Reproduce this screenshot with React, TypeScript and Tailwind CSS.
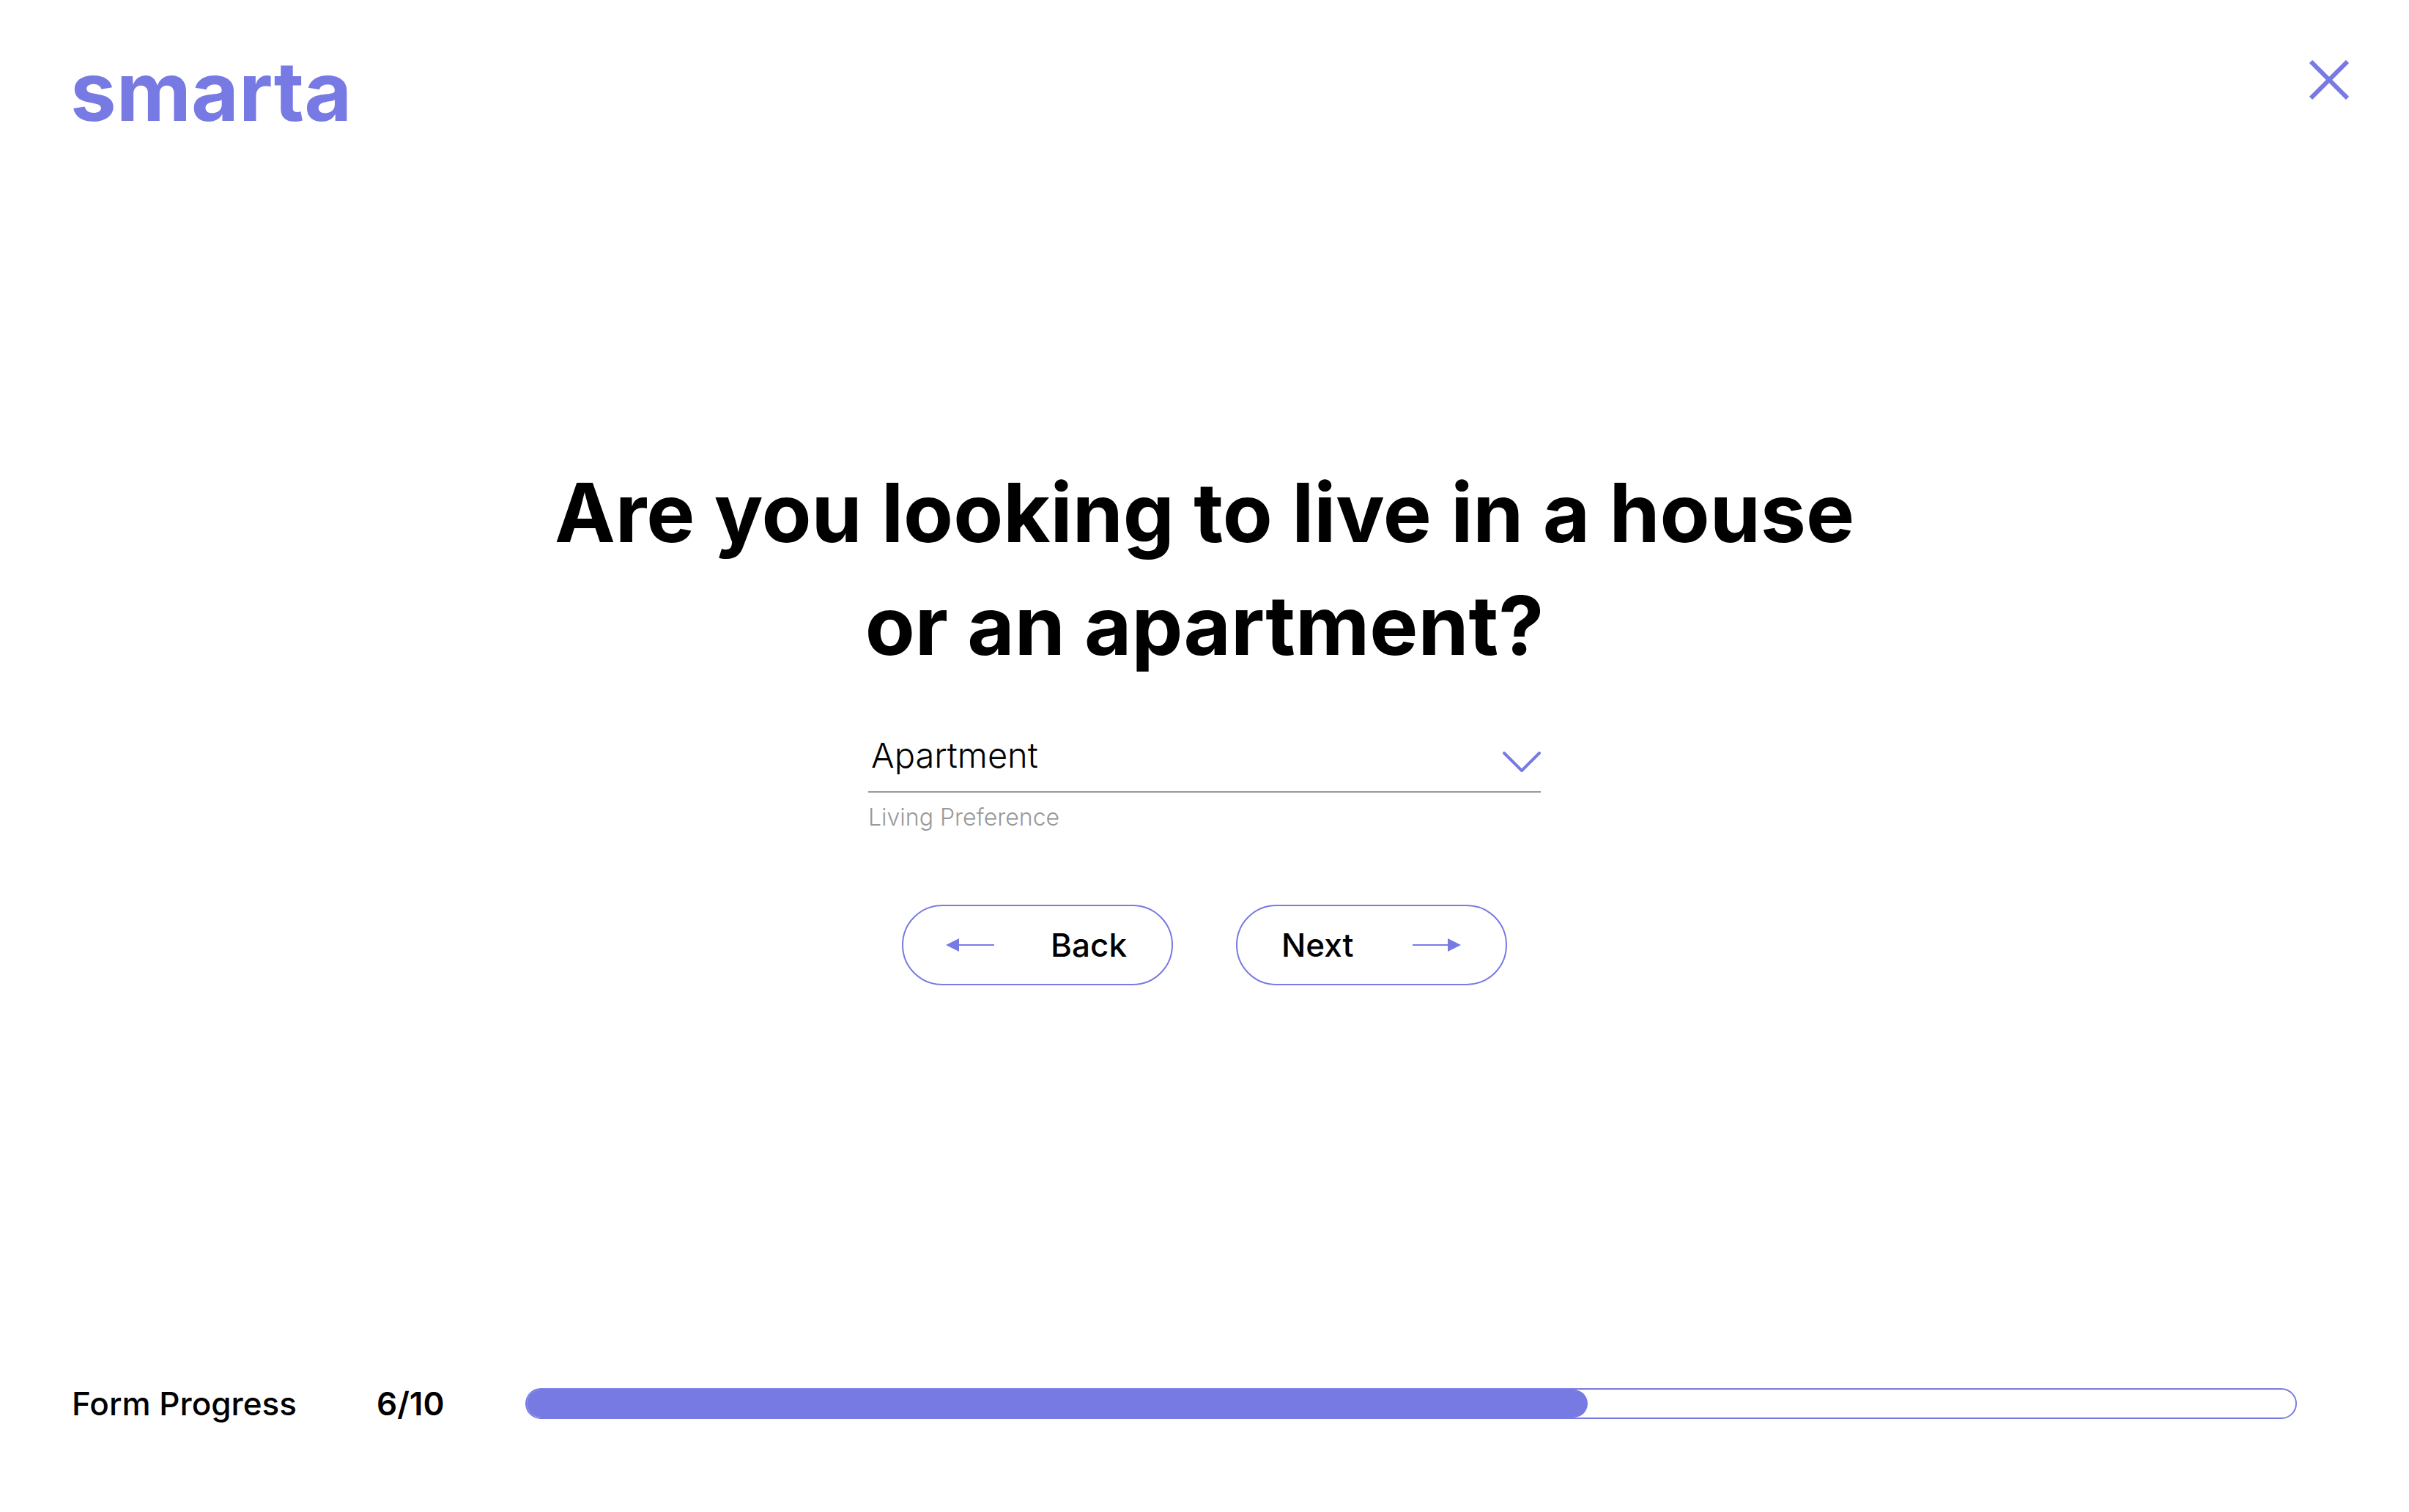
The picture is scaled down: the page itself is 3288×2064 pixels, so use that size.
import { useState } from "react";

const TOTAL_STEPS = 10;
const CURRENT_STEP = 6;

function CloseIcon() {
  return (
    <svg viewBox="0 0 54 54" className="size-[54px]" fill="none" stroke="currentColor" strokeWidth="6" aria-hidden="true">
      <path d="M2 2 52 52M52 2 2 52" />
    </svg>
  );
}

function ChevronIcon() {
  return (
    <svg
      viewBox="0 0 52 28"
      className="pointer-events-none absolute right-0 bottom-[26px] h-[28px] w-[52px] text-[#787ae4]"
      fill="none"
      stroke="currentColor"
      strokeWidth="4"
      strokeLinecap="round"
      aria-hidden="true"
    >
      <path d="M2 2 26 26 50 2" />
    </svg>
  );
}

function ArrowLeft() {
  return (
    <svg viewBox="0 0 66 18" className="h-[18px] w-[66px] text-[#787ae4]" fill="currentColor" aria-hidden="true">
      <path d="M0 9 18 0V8H66V10H18V18Z" />
    </svg>
  );
}

function ArrowRight() {
  return (
    <svg viewBox="0 0 66 18" className="h-[18px] w-[66px] text-[#787ae4]" fill="currentColor" aria-hidden="true">
      <path d="M66 9 48 0V8H0V10H48V18Z" />
    </svg>
  );
}

export default function App() {
  const [preference, setPreference] = useState("Apartment");
  const buttonClass =
    "flex h-[110px] w-[370px] items-center justify-between rounded-full border-2 border-[#787ae4] pr-[61px] text-[44px] leading-[52px] font-medium";

  return (
    <div className="flex min-h-screen flex-col bg-white font-[Inter,sans-serif] text-black">
      <header className="flex items-start justify-between pt-[66px] pr-[82px] pl-[96px]">
        <a href="#" className="text-[112px] leading-[116px] font-bold text-[#787ae4]">
          smarta
        </a>
        <button type="button" aria-label="Close" className="mt-[16px] text-[#787ae4]">
          <CloseIcon />
        </button>
      </header>

      <main className="flex flex-1 flex-col items-center pt-[441px]">
        <h1 className="text-center text-[111px] leading-[154px] font-bold">
          Are you looking to live in a house
          <br />
          or an apartment?
        </h1>

        <div className="mt-[67px] w-[918px] max-w-full">
          <div className="relative border-b-2 border-[#999999]">
            <select
              id="living-preference"
              value={preference}
              onChange={(event) => setPreference(event.target.value)}
              className="block h-[82px] w-full appearance-none bg-transparent pb-[16px] pl-[4px] text-[47px] leading-[52px] font-light outline-none"
            >
              <option>Apartment</option>
              <option>House</option>
            </select>
            <ChevronIcon />
          </div>
          <label htmlFor="living-preference" className="mt-[14px] block text-[32px] leading-[40px] font-light text-[#999999]">
            Living Preference
          </label>
        </div>

        <div className="mt-[99px] flex gap-[86px]">
          <button type="button" className={`${buttonClass} pl-[58px]`}>
            <ArrowLeft />
            Back
          </button>
          <button type="button" className={`${buttonClass} pl-[60px]`}>
            Next
            <ArrowRight />
          </button>
        </div>
      </main>

      <footer className="flex items-center pr-[153px] pb-[122px] pl-[98px] text-[44px] leading-[52px]">
        <span id="progress-label" className="w-[416px] shrink-0 font-medium">
          Form Progress
        </span>
        <span className="w-[203px] shrink-0 font-semibold">
          {CURRENT_STEP}/{TOTAL_STEPS}
        </span>
        <div
          role="progressbar"
          aria-labelledby="progress-label"
          aria-valuemin={0}
          aria-valuemax={TOTAL_STEPS}
          aria-valuenow={CURRENT_STEP}
          className="h-[42px] flex-1 rounded-full border-2 border-[#787ae4] bg-white"
        >
          <div
            className="h-full rounded-full bg-[#787ae4]"
            style={{ width: `${(CURRENT_STEP / TOTAL_STEPS) * 100}%` }}
          />
        </div>
      </footer>
    </div>
  );
}
